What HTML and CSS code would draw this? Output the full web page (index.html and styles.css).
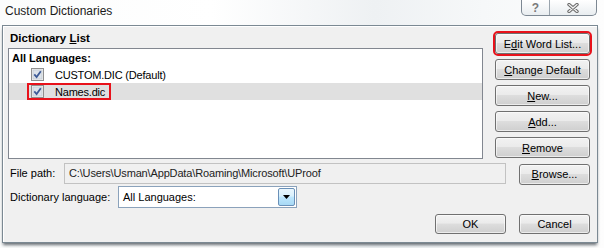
FILE: index.html
```html
<!DOCTYPE html>
<html lang="en">

<head>
    <meta charset="UTF-8">
    <title>Custom Dictionaries</title>
    <link rel="stylesheet" href="styles.css">
</head>

<body>

    <!-- Title bar -->
    <div class="titlebar">
        <span class="title">Custom Dictionaries</span>
        <div class="caption">
            <span class="cap cap-help">?</span>
            <span class="cap cap-close">
                <svg width="12" height="10" viewBox="0 0 12 10">
                    <path d="M2 1.5 L10 8.5 M10 1.5 L2 8.5" stroke="#6a6a6a" stroke-width="3.4" stroke-linecap="round" fill="none"/>
                    <path d="M2 1.5 L10 8.5 M10 1.5 L2 8.5" stroke="#f4f4f4" stroke-width="1.3" stroke-linecap="round" fill="none"/>
                </svg>
            </span>
        </div>
    </div>

    <!-- Dialog body -->
    <div class="frame">
        <div class="main">
            <div class="list-area">
                <div class="group-label">Dictionary <u>L</u>ist</div>
                <div class="listbox">
                    <div class="list-head">All Languages:</div>
                    <div class="list-row">
                        <span class="entry">
                            <svg class="check" width="13" height="13" viewBox="0 0 13 13">
                                <rect x="0.5" y="0.5" width="12" height="12" fill="#f4f4f4" stroke="#8f8f8f"/>
                                <rect x="2" y="2" width="9" height="9" fill="#dde3ea" stroke="#c3cad3" stroke-width="0.8"/>
                                <path d="M3.3 6.4 L5.6 9 L9.8 3.3" stroke="#3d5b97" stroke-width="1.8" fill="none"/>
                            </svg>
                            <span>CUSTOM.DIC (Default)</span>
                        </span>
                    </div>
                    <div class="list-row selected">
                        <span class="entry marked">
                            <svg class="check" width="13" height="13" viewBox="0 0 13 13">
                                <rect x="0.5" y="0.5" width="12" height="12" fill="#f4f4f4" stroke="#8f8f8f"/>
                                <rect x="2" y="2" width="9" height="9" fill="#dde3ea" stroke="#c3cad3" stroke-width="0.8"/>
                                <path d="M3.3 6.4 L5.6 9 L9.8 3.3" stroke="#3d5b97" stroke-width="1.8" fill="none"/>
                            </svg>
                            <span>Names.dic</span>
                        </span>
                    </div>
                </div>
            </div>

            <div class="side-buttons">
                <button class="btn marked">E<u>d</u>it Word List...</button>
                <button class="btn"><u>C</u>hange Default</button>
                <button class="btn"><u>N</u>ew...</button>
                <button class="btn"><u>A</u>dd...</button>
                <button class="btn"><u>R</u>emove</button>
            </div>
        </div>

        <div class="path-row">
            <span class="path-label">File path:</span>
            <div class="path-box">C:\Users\Usman\AppData\Roaming\Microsoft\UProof</div>
            <button class="btn btn-small"><u>B</u>rowse...</button>
        </div>

        <div class="lang-row">
            <span class="lang-label">Dictionary language:</span>
            <div class="combo">
                <span class="combo-text">All Languages:</span>
                <span class="combo-arrow">
                    <svg width="7" height="4" viewBox="0 0 7 4"><path d="M0 0 H7 L3.5 4 Z" fill="#000"/></svg>
                </span>
            </div>
        </div>

        <div class="actions">
            <button class="btn btn-small">OK</button>
            <button class="btn btn-small">Cancel</button>
        </div>
    </div>

</body>

</html>
```

FILE: styles.css
```css
/* Custom Dictionaries dialog */

body {
    margin: 0;
    width: 604px;
    height: 248px;
    overflow: hidden;
    font-family: "Liberation Sans", Arial, sans-serif;
    font-size: 11px;
    color: #000;
    background: linear-gradient(to right, #fbfcfc 0%, #ffffff 35%, #eef1f3 62%, #f6f8f9 80%, #fdfdfd 100%);
}

/* Title bar */

.titlebar {
    height: 25px;
    display: flex;
    align-items: flex-start;
    padding: 0 7px 0 5px;
}

.title {
    font-size: 12px;
    line-height: 15px;
    padding-top: 4px;
    color: #1a1a1a;
}

.caption {
    margin-left: auto;
    display: flex;
    height: 15px;
    border: 1px solid #7d8893;
    border-top: none;
    border-radius: 0 0 5px 5px;
    background: linear-gradient(#ffffff, #e9edf0);
    overflow: hidden;
}

.cap {
    display: flex;
    align-items: center;
    justify-content: center;
}

.cap-help {
    width: 27px;
    border-right: 1px solid #9aa4ad;
    font-weight: bold;
    font-size: 12px;
    color: #7a7a7a;
}

.cap-close {
    width: 46px;
}

/* Frame */

.frame {
    margin-left: 2px;
    width: 594px;
    border: 1px solid #7b8993;
    background-color: #f0f0f0;
    box-shadow: inset 1px 1px 0 #ffffff, 0 3px 3px -1px rgba(20, 30, 40, 0.65);
    padding: 4px 0 8px 0;
}

.main {
    display: flex;
    padding: 0 7px 0 5px;
}

.list-area {
    width: 475px;
}

.group-label {
    font-weight: bold;
    font-size: 11.5px;
    height: 16px;
    line-height: 16px;
    padding-left: 2px;
    margin-bottom: 2px;
}

.listbox {
    height: 108px;
    border: 1px solid #828790;
    background-color: #fff;
    padding-top: 1px;
    box-sizing: content-box;
}

.list-head {
    font-weight: bold;
    height: 16px;
    line-height: 16px;
    padding-left: 3px;
}

.list-row {
    height: 17px;
    display: flex;
    align-items: stretch;
    padding-left: 18px;
    letter-spacing: -0.2px;
}

.list-row.selected {
    background-color: #e0e0e0;
}

.entry {
    display: flex;
    align-items: center;
    padding: 0 6px 0 4px;
}

.check {
    margin-right: 11px;
}

.marked {
    outline: 2px solid #e8121b;
}

.entry.marked {
    outline-offset: -2px;
}

/* Buttons */

.side-buttons {
    margin-left: auto;
    margin-top: 3px;
    width: 95px;
    display: flex;
    flex-direction: column;
    gap: 5px;
}

.btn {
    height: 21px;
    padding: 0;
    border: 1px solid #707070;
    border-radius: 3px;
    background: linear-gradient(#f2f2f2 0%, #ebebeb 45%, #dddddd 50%, #cfcfcf 100%);
    box-shadow: inset 0 0 0 1px rgba(255, 255, 255, 0.6);
    font-family: inherit;
    font-size: 11px;
    color: #000;
}

.btn-small {
    width: 71px;
}

/* File path */

.path-row,
.lang-row {
    display: flex;
    align-items: center;
    height: 22px;
    padding: 0 7px 0 5px;
}

.path-row {
    margin-top: 3px;
}

.path-label {
    width: 54px;
    padding-left: 2px;
}

.path-box {
    width: 432px;
    height: 19px;
    line-height: 19px;
    border: 1px solid #c2c2c2;
    padding-left: 4px;
    padding-right: 4px;
    background-color: #f0f0f0;
    color: #222;
    letter-spacing: -0.15px;
    white-space: nowrap;
    overflow: hidden;
}

.path-row .btn {
    margin-left: auto;
    margin-top: 2px;
}

/* Language */

.lang-row {
    margin-top: 2px;
}

.lang-label {
    width: 108px;
    padding-left: 2px;
}

.combo {
    width: 177px;
    height: 20px;
    border: 1px solid #8ba2bb;
    background-color: #fff;
    display: flex;
    align-items: center;
}

.combo-text {
    padding-left: 4px;
    flex: 1;
}

.combo-arrow {
    width: 17px;
    height: 18px;
    margin-right: 1px;
    border: 1px solid #6a90b8;
    border-radius: 2px;
    box-sizing: border-box;
    background: linear-gradient(#eaf6fd 0%, #d9f0fc 45%, #bee6fd 50%, #a7d9f5 100%);
    display: flex;
    align-items: center;
    justify-content: center;
}

/* OK / Cancel */

.actions {
    display: flex;
    justify-content: flex-end;
    gap: 13px;
    margin-top: 6px;
    padding-right: 7px;
}

.actions .btn {
    height: 20px;
}
```
